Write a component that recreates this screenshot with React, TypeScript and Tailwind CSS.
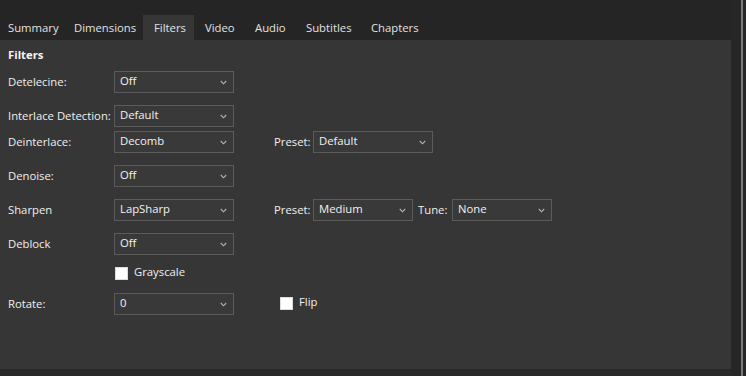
import React from 'react';

const font = { fontFamily: '"Segoe UI", "Open Sans", "Noto Sans", sans-serif' };

const tabs = [
  { label: 'Summary', w: 'w-[63px]', pl: 'pl-[8px]' },
  { label: 'Dimensions', w: 'w-[80px]', pl: 'pl-[11px]' },
  { label: 'Filters', w: 'w-[51px]', pl: 'pl-[11px]' },
  { label: 'Video', w: 'w-[50px]', pl: 'pl-[11px]' },
  { label: 'Audio', w: 'w-[51px]', pl: 'pl-[11px]' },
  { label: 'Subtitles', w: 'w-[65px]', pl: 'pl-[11px]' },
  { label: 'Chapters', w: 'w-[70px]', pl: 'pl-[11px]' },
];

const Chevron = () => (
  <svg width="7" height="5" viewBox="0 0 7 5" className="shrink-0">
    <path d="M0.8 1 L3.5 3.8 L6.2 1" fill="none" stroke="#b4b4b4" strokeWidth="1.1" />
  </svg>
);

const Combo = ({ value, w = 'w-[120px]' }: { value: string; w?: string }) => (
  <div
    className={`${w} h-[22px] flex items-center justify-between border border-[#5b5b5b] bg-[#393939] pl-[5px] pr-[6px] text-[11.3px] text-[#f2f2f2]`}
  >
    <span className="-mt-[2px]">{value}</span>
    <Chevron />
  </div>
);

const Label = ({ children, w = 'w-[106px]' }: { children: React.ReactNode; w?: string }) => (
  <div className={`${w} shrink-0 text-[11.3px] text-[#f0f0f0] whitespace-nowrap`}>{children}</div>
);

const Check = ({ label }: { label: string }) => (
  <div className="flex items-center gap-[6px]">
    <div className="w-[13px] h-[13px] bg-white border border-[#dcdcdc]" />
    <span className="text-[11.3px] text-[#f0f0f0] leading-none -mt-[3px]">{label}</span>
  </div>
);

export default function App() {
  return (
    <div className="w-[746px] h-[376px] bg-[#252525] flex overflow-hidden" style={font}>
      <div className="w-[731px] flex flex-col">
        <div className="h-[15px]" />
        <div className="flex h-[25px]">
          {tabs.map((t) => (
            <div
              key={t.label}
              className={`${t.w} ${t.pl} h-full flex items-center pt-[2px] text-[11.3px] text-[#e2e2e2] ${
                t.label === 'Filters' ? 'bg-[#363636]' : ''
              }`}
            >
              {t.label}
            </div>
          ))}
        </div>
        <div className="h-[329px] bg-[#363636] pl-[8px] flex flex-col">
          <div className="mt-[7px] h-[16px] flex items-center text-[11.3px] font-bold text-[#f4f4f4]">Filters</div>

          <div className="mt-[8px] flex items-center">
            <Label>Detelecine:</Label>
            <Combo value="Off" />
          </div>

          <div className="mt-[12px] flex items-center">
            <Label>Interlace Detection:</Label>
            <Combo value="Default" />
          </div>

          <div className="mt-[4px] flex items-center">
            <Label>Deinterlace:</Label>
            <Combo value="Decomb" />
            <Label w="w-[39px] ml-[40px]">Preset:</Label>
            <Combo value="Default" />
          </div>

          <div className="mt-[12px] flex items-center">
            <Label>Denoise:</Label>
            <Combo value="Off" />
          </div>

          <div className="mt-[12px] flex items-center">
            <Label>Sharpen</Label>
            <Combo value="LapSharp" />
            <Label w="w-[39px] ml-[40px]">Preset:</Label>
            <Combo value="Medium" w="w-[100px]" />
            <Label w="w-[34px] ml-[5px]">Tune:</Label>
            <Combo value="None" w="w-[100px]" />
          </div>

          <div className="mt-[12px] flex items-center">
            <Label>Deblock</Label>
            <Combo value="Off" />
          </div>

          <div className="mt-[12px] h-[13px] flex items-center pl-[107px]">
            <Check label="Grayscale" />
          </div>

          <div className="mt-[13px] flex items-center">
            <Label>Rotate:</Label>
            <Combo value="0" />
            <div className="ml-[46px] -mt-[2px]">
              <Check label="Flip" />
            </div>
          </div>
        </div>
        <div className="flex-1 bg-[#292929]" />
      </div>
      <div className="w-[10px] bg-[#262626]" />
      <div className="w-[2px] bg-[#7a7a7a]" />
      <div className="flex-1 bg-[#252525]" />
    </div>
  );
}
